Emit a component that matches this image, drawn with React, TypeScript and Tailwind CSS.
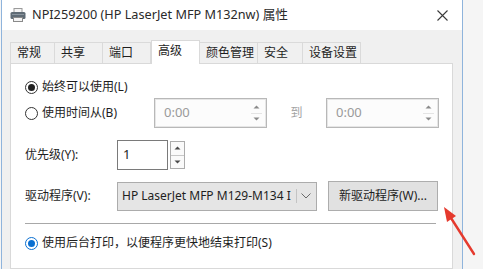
import React from 'react'

const font = "font-['Noto_Sans','Noto_Sans_CJK_SC',sans-serif]"

function Radio({ checked, blue }: { checked?: boolean; blue?: boolean }) {
	const ring = blue ? 'border-[#0a6fd1]' : 'border-[#333333]'
	const dot = blue ? 'bg-[#0a6fd1]' : 'bg-[#222222]'
	return (
		<span className={`flex h-[13px] w-[13px] shrink-0 items-center justify-center rounded-full border bg-white ${ring}`}>
			{checked && <span className={`h-[7px] w-[7px] rounded-full ${dot}`} />}
		</span>
	)
}

function Tri({ up, color = '#8a8a8a' }: { up?: boolean; color?: string }) {
	return (
		<svg width="7" height="4" viewBox="0 0 7 4">
			<path d={up ? 'M0.5 3.5 L3.5 0.5 L6.5 3.5 Z' : 'M0.5 0.5 L3.5 3.5 L6.5 0.5 Z'} fill={color} />
		</svg>
	)
}

function TimeBox() {
	return (
		<div className="flex h-[30px] w-[113px] items-center border border-[#b8b8b8] bg-[#fcfcfc] shadow-[inset_0_0_0_1px_#e6e6e6]">
			<span className="flex-1 pl-[9px] text-[13px] text-[#9a9a9a]">0:00</span>
			<div className="mr-[4px] flex h-[22px] w-[11px] flex-col">
				<div className="flex flex-1 items-center justify-center border-b border-[#e4e4e4]">
					<Tri up />
				</div>
				<div className="flex flex-1 items-center justify-center">
					<Tri />
				</div>
			</div>
		</div>
	)
}

function PrinterIcon() {
	return (
		<svg width="16" height="14" viewBox="0 0 16 14">
			<rect x="4" y="0.5" width="8" height="4" fill="#f4f4f4" stroke="#9a9a9a" />
			<rect x="0.5" y="4" width="15" height="7" rx="1.5" fill="#5f6b75" />
			<rect x="2" y="6" width="12" height="1" fill="#8a959e" />
			<rect x="3.5" y="9.5" width="9" height="4" fill="#f4f4f4" stroke="#8a8a8a" />
		</svg>
	)
}

const tabs = [
	{ label: '常规', w: 'w-[45px]' },
	{ label: '共享', w: 'w-[49px]' },
	{ label: '端口', w: 'w-[49px]' },
	{ label: '高级', w: 'w-[49px]', active: true },
	{ label: '颜色管理', w: 'w-[59px]' },
	{ label: '安全', w: 'w-[46px]' },
	{ label: '设备设置', w: 'w-[59px]' },
]

export default function App() {
	return (
		<div className={`relative flex h-[269px] w-[483px] overflow-hidden bg-[#f5f5f5] text-[12px] text-[#1e1e1e] ${font}`}>
			<div className="ml-[1px] flex w-[462px] shrink-0 flex-col border-x border-[#8fb4dc] bg-[#f0f0f0]">
				{/* title bar */}
				<div className="flex h-[30px] shrink-0 items-center bg-white">
					<span className="ml-[8px] mt-[-1px]">
						<PrinterIcon />
					</span>
					<span className="ml-[6px] text-[12.7px] text-[#2a2a2a]">NPI259200 (HP LaserJet MFP M132nw) 属性</span>
					<span className="ml-auto mr-[14px]">
						<svg width="11" height="11" viewBox="0 0 11 11">
							<path d="M0.5 0.5 L10.5 10.5 M10.5 0.5 L0.5 10.5" stroke="#3a3a3a" strokeWidth="1.1" />
						</svg>
					</span>
				</div>

				<div className="flex flex-1 flex-col pl-[8px] pr-[9px] pt-[10px]">
					{/* tabs */}
					<div className="relative z-10 flex h-[23px] items-end">
						{tabs.map((t) =>
							t.active ? (
								<div
									key={t.label}
									className={`${t.w} -mb-px flex h-[24px] items-center border border-b-0 border-[#d9d9d9] bg-white pb-[3px] pl-[6px]`}
								>
									{t.label}
								</div>
							) : (
								<div
									key={t.label}
									className={`${t.w} -ml-px flex h-[21px] items-center border border-b-0 border-[#dadada] bg-[#f0f0f0] pl-[6px] first:ml-0`}
								>
									{t.label}
								</div>
							),
						)}
					</div>

					{/* panel */}
					<div className="flex flex-1 flex-col border border-[#d9d9d9] bg-white pl-[14px] pt-[13px]">
						<div className="flex h-[20px] items-center">
							<Radio checked />
							<span className="ml-[4px]">始终可以使用(L)</span>
						</div>

						<div className="mt-[1px] flex h-[30px] items-center">
							<div className="flex w-[129px] items-center">
								<Radio />
								<span className="ml-[4px]">使用时间从(B)</span>
							</div>
							<TimeBox />
							<span className="w-[59px] text-center text-[#a3a3a3]">到</span>
							<TimeBox />
						</div>

						<div className="mt-[12px] flex h-[30px] items-center">
							<span className="w-[92px]">优先级(Y):</span>
							<div className="flex h-[30px] w-[51px] items-center border border-[#7a7a7a] pl-[5px] text-[13px]">1</div>
							<div className="ml-[2px] flex h-[28px] w-[15px] flex-col border border-[#acacac] bg-[#fafafa]">
								<div className="flex flex-1 items-center justify-center border-b border-[#c8c8c8]">
									<Tri up color="#4a4a4a" />
								</div>
								<div className="flex flex-1 items-center justify-center">
									<Tri color="#4a4a4a" />
								</div>
							</div>
						</div>

						<div className="mt-[11px] flex h-[30px] items-center">
							<span className="w-[92px]">驱动程序(V):</span>
							<div className="flex h-[29px] w-[200px] items-center border border-[#acacac] bg-[#e5e5e5] pl-[4px] text-[12px]">
								<span className="flex-1 whitespace-nowrap">HP LaserJet MFP M129-M134 I</span>
								<span className="ml-[2px] mr-[4px] h-[14px] shrink-0 border-l border-[#c4c4c4]" />
								<svg width="10" height="6" viewBox="0 0 10 6" className="mr-[5px] shrink-0">
									<path d="M0.5 0.5 L5 5 L9.5 0.5" fill="none" stroke="#6a6a6a" />
								</svg>
							</div>
							<div className="ml-[11px] flex h-[30px] w-[110px] items-center justify-center border border-[#adadad] bg-[#e1e1e1]">
								新驱动程序(W)...
							</div>
						</div>

						<div className="mt-[12px] h-px w-[411px] bg-[#a8a8a8]" />

						<div className="mt-[9px] flex h-[20px] items-center">
							<Radio checked blue />
							<span className="ml-[4px]">使用后台打印，以便程序更快地结束打印(S)</span>
						</div>
					</div>
				</div>
			</div>

			{/* red annotation arrow */}
			<svg className="pointer-events-none absolute left-0 top-0" width="483" height="269" viewBox="0 0 483 269">
				<line x1="474" y1="254" x2="451" y2="218" stroke="#e53a2e" strokeWidth="2.4" strokeLinecap="round" />
				<polygon points="444,207 456,216 447,222" fill="#e53a2e" />
			</svg>
		</div>
	)
}
